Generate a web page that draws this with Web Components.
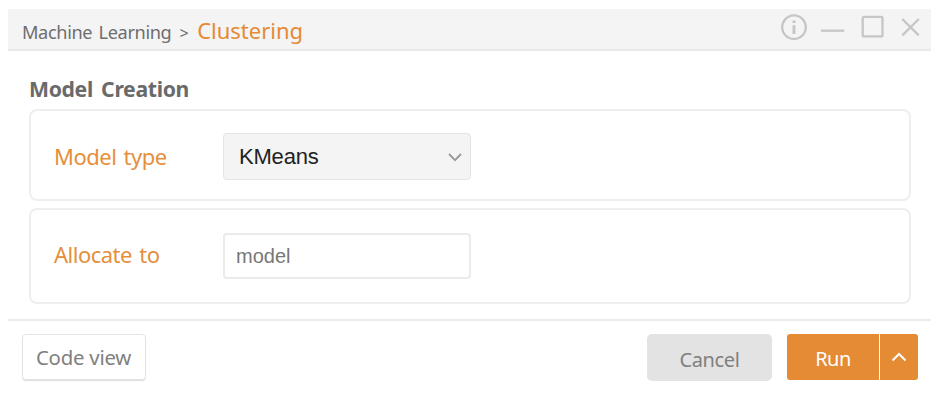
<!DOCTYPE html>
<html lang="en">
<head>
<meta charset="utf-8">
<title>Clustering</title>
<style>
body { margin: 0; background: #fff; font-family: "Noto Sans", "Open Sans", sans-serif; }
</style>
</head>
<body>
<ml-dialog></ml-dialog>
<script>
const define = (name, html) => customElements.define(name, class extends HTMLElement {
  constructor() {
    super();
    this.attachShadow({ mode: 'open' }).innerHTML = html;
  }
});

define('window-controls', `
<style>
:host { display: flex; }
svg { display: block; fill: none; stroke: #c6c6c6; stroke-width: 2.3; }
</style>
<svg width="144" height="34" viewBox="780 10 144 34">
  <circle cx="794" cy="27.2" r="11.8"/>
  <path d="M794 25.2V34M794 20.6V23" stroke-width="2.9"/>
  <path d="M821 30.7H844.2"/>
  <rect x="862.7" y="16.8" width="19.8" height="19.6" rx="1.5"/>
  <path d="M902.3 19L918.8 35.4M918.8 19L902.3 35.4"/>
</svg>`);

define('title-bar', `
<style>
:host { display: flex; justify-content: space-between; align-items: flex-start; box-sizing: border-box;
  height: 42px; background: #f4f4f4; border-bottom: 2px solid #e9e9e9; padding: 1px 7px 0 14px; }
nav { display: flex; align-items: baseline; white-space: pre; color: #6e6e6e; font-size: 18.2px;
  letter-spacing: -.38px; word-spacing: 2px; line-height: 40px; }
.gt { font-size: 16px; margin: 0 9px 0 8px; }
.now { color: #e58a32; font-size: 22px; letter-spacing: 0; }
</style>
<nav><slot name="parent"></slot><span class="gt">&gt;</span><span class="now"><slot></slot></span></nav>
<window-controls></window-controls>`);

define('form-card', `
<style>
:host { display: flex; box-sizing: border-box; border: 2px solid #eee; border-radius: 8px;
  padding: 22px 0 0 23px; }
label { width: 169px; flex: none; color: #e58f3b; font-size: 22px; line-height: var(--line, 46px); letter-spacing: -.5px; word-spacing: 2px; white-space: nowrap; }
</style>
<label><slot name="label"></slot></label><slot></slot>`);

define('select-box', `
<style>
:host { display: flex; justify-content: space-between; align-items: center; box-sizing: border-box; width: 248px; height: 47px;
  border: 1.5px solid #e4e4e4; border-radius: 4px; background: #f4f4f4; padding: 1px 8px 0 15px;
  font: 22px "Liberation Sans", Arial, sans-serif; letter-spacing: -.2px; color: #222; }
svg { fill: none; stroke: #999; stroke-width: 1.8; }
</style>
<span><slot></slot></span>
<svg width="14" height="9" viewBox="0 0 14 9"><path d="M1 1L7 7.2L13 1"/></svg>`);

define('text-box', `
<style>
:host { display: flex; align-items: center; box-sizing: border-box; width: 248px; height: 46px;
  border: 2px solid #ebebeb; border-radius: 4px; background: #fff; padding: 0 11px; margin-top: 1px;
  font: 20px "Liberation Sans", Arial, sans-serif; color: #777; }
</style>
<slot></slot>`);

define('push-button', `
<style>
:host { display: flex; justify-content: center; box-sizing: border-box; height: 46px; border-radius: 4px;
  font-size: 20px; line-height: 46px; color: #808080; white-space: nowrap; }
:host([kind=outline]) { width: 124px; border: 1.5px solid #e4e4e4; box-shadow: 0 1px 1px #ddd; font-size: 20.4px; letter-spacing: -.25px; line-height: 44px; padding-right: 1px; }
:host([kind=plain]) { width: 125px; height: 47px; background: #e3e3e3; letter-spacing: -.4px; border-radius: 5px; line-height: 52px; }
:host([kind=primary]) { width: 92px; background: #e48b33; color: #fff; border-radius: 3px 0 0 3px; letter-spacing: -.5px; line-height: 49px; }
:host([kind=more]) { width: 38px; background: #e48b33; color: #fff; border-radius: 0 3px 3px 0; align-items: center; }
</style>
<slot></slot>`);

define('dialog-footer', `
<style>
:host { display: flex; justify-content: space-between; border-top: 2px solid #ebebeb; padding: 13px 13px 0 14px; }
.actions { display: flex; gap: 15px; }
.split { display: flex; gap: 1px; }
svg { fill: none; stroke: #fff; stroke-width: 2; }
</style>
<push-button kind="outline">Code view</push-button>
<div class="actions">
  <push-button kind="plain">Cancel</push-button>
  <div class="split">
    <push-button kind="primary">Run</push-button>
    <push-button kind="more"><svg width="16" height="10" viewBox="0 0 16 10"><path d="M1.5 8.5L8 2L14.5 8.5"/></svg></push-button>
  </div>
</div>`);

define('ml-dialog', `
<style>
:host { display: block; box-sizing: border-box; width: 940px; height: 406px; padding: 9px 9px 0 8px; overflow: hidden; }
main { display: flex; flex-direction: column; height: 268px; box-sizing: border-box; padding: 22px 20px 0 21px; }
h2 { margin: 0 0 4px; height: 32px; font-size: 21.2px; line-height: 32px; letter-spacing: -.33px; word-spacing: 3px; color: #6a6a6a; white-space: nowrap; }
form-card { height: 92px; flex: none; }
form-card + form-card { height: 96px; margin-top: 7px; --line: 44px; }
</style>
<title-bar><span slot="parent">Machine Learning</span>Clustering</title-bar>
<main>
  <h2>Model Creation</h2>
  <form-card><span slot="label">Model type</span><select-box>KMeans</select-box></form-card>
  <form-card><span slot="label">Allocate to</span><text-box>model</text-box></form-card>
</main>
<dialog-footer></dialog-footer>`);
</script>
</body>
</html>
